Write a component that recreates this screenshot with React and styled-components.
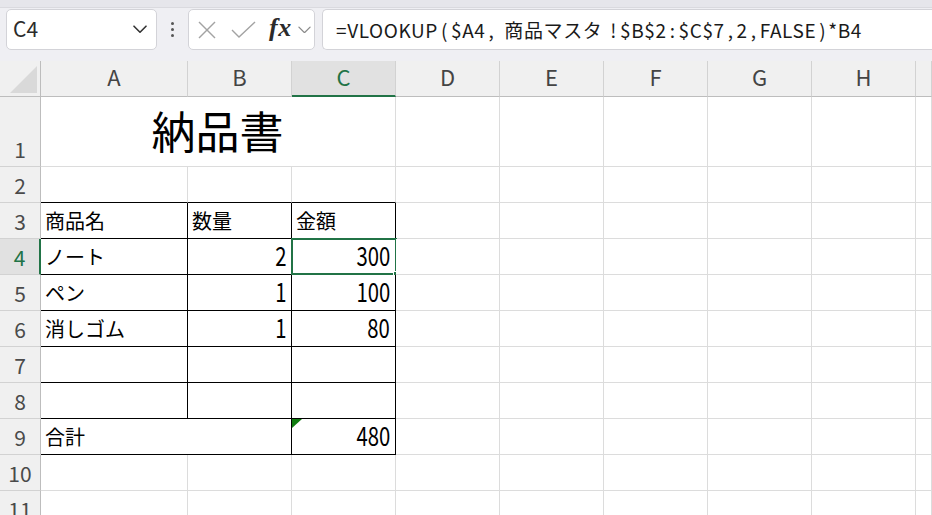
import React from "react";
import styled, { createGlobalStyle, css } from "styled-components";

const Global = createGlobalStyle`
  html, body { margin: 0; padding: 0; background: #ffffff; overflow: hidden; }
  body { font-family: "Noto Sans CJK JP", "Noto Sans", sans-serif; }
  * { box-sizing: border-box; }
`;

const GRID = "#dcdcdc";
const BLACK = "#000000";
const GREEN = "#217346";
const JP = `"Noto Sans CJK JP", "Noto Sans", sans-serif`;

const Page = styled.div`
  width: 932px;
  height: 515px;
  overflow: hidden;
  background: #ffffff;
`;

const TopStrip = styled.div`
  height: 8px;
  background: #e6e6eb;
  border-bottom: 1px solid #dadadf;
`;

const Toolbar = styled.div`
  height: 53px;
  background: #efeff3;
  display: flex;
  align-items: flex-start;
  padding: 1px 0 0 6px;
`;

const Box = styled.div`
  height: 41px;
  background: #ffffff;
  border: 1px solid #d3d3d8;
  border-radius: 5px;
  display: flex;
  align-items: center;
`;

const NameBox = styled(Box)`
  width: 151px;
  padding: 0 9px 0 6px;
  justify-content: space-between;
`;

const NameText = styled.span`
  font-family: ${JP};
  font-size: 21px;
  color: #2b2b2b;
  line-height: 1;
  padding-bottom: 2px;
`;

const Dots = styled.div`
  width: 31px;
  display: flex;
  flex-direction: column;
  align-items: center;
  justify-content: center;
  gap: 3px;
  height: 41px;
  span {
    width: 3px;
    height: 3px;
    border-radius: 50%;
    background: #555;
  }
`;

const FxBox = styled(Box)`
  width: 127px;
  padding-left: 8px;
`;

const FxText = styled.span`
  font-family: "Liberation Serif", "DejaVu Serif", serif;
  font-style: italic;
  font-weight: bold;
  font-size: 26px;
  color: #2b2b2b;
  line-height: 1;
  margin: 0 6px 4px 12px;
  letter-spacing: 0.5px;
`;

const FormulaBox = styled(Box)`
  margin-left: 7px;
  flex: 1;
  border-right: none;
  border-top-right-radius: 0;
  border-bottom-right-radius: 0;
  padding-left: 13px;
  font-family: ${JP};
  font-size: 19px;
  letter-spacing: 0.6px;
  color: #1a1a1a;
  white-space: nowrap;
`;

const P = styled.span`
  margin: 0 ${(p) => p.$r ?? 3}px 0 ${(p) => p.$l ?? 3}px;
`;

const Sheet = styled.div`
  display: grid;
  grid-template-columns: 41px 147px repeat(7, 104px) 1fr;
  grid-template-rows: 36px 70px repeat(10, 36px);
`;

const Corner = styled.div`
  background: #f0f0f0;
  border-right: 1px solid #bdbdbd;
  border-bottom: 1px solid #bdbdbd;
  position: relative;
  &::after {
    content: "";
    position: absolute;
    right: 3px;
    bottom: 3px;
    width: 0;
    height: 0;
    border-left: 27px solid transparent;
    border-bottom: 27px solid #d9d9d9;
  }
`;

const ColHeader = styled.div`
  background: ${(p) => (p.$sel ? "#e1e1e1" : "#f0f0f0")};
  border-right: 1px solid #d2d2d2;
  border-bottom: ${(p) => (p.$sel ? `2px solid ${GREEN}` : "1px solid #bdbdbd")};
  display: flex;
  align-items: center;
  justify-content: center;
  padding-bottom: ${(p) => (p.$sel ? "5px" : "6px")};
  font-family: ${JP};
  font-size: 22px;
  line-height: 1;
  color: ${(p) => (p.$sel ? GREEN : "#444")};
`;

const RowHeader = styled.div`
  background: ${(p) => (p.$sel ? "#e1e1e1" : "#f0f0f0")};
  border-right: ${(p) => (p.$sel ? `2px solid ${GREEN}` : "1px solid #bdbdbd")};
  border-bottom: 1px solid #d2d2d2;
  display: flex;
  align-items: flex-end;
  justify-content: center;
  padding-bottom: 5px;
  font-family: ${JP};
  font-size: 21px;
  line-height: 24px;
  color: ${(p) => (p.$sel ? GREEN : "#4a4a4a")};
`;

const Cell = styled.div`
  position: relative;
  background: #ffffff;
  border-right: 1px solid ${(p) => (p.$br ? BLACK : GRID)};
  border-bottom: 1px solid ${(p) => (p.$bb ? BLACK : GRID)};
  grid-column: span ${(p) => p.$span || 1};
  display: flex;
  align-items: flex-end;
  justify-content: ${(p) => (p.$right ? "flex-end" : "flex-start")};
  padding: 0 5px 5px 4px;
  font-family: ${JP};
  font-size: 20px;
  line-height: 24px;
  color: #000;
  white-space: nowrap;
  ${(p) =>
    p.$title &&
    css`
      justify-content: center;
      font-size: 44px;
      line-height: 52px;
      padding-bottom: 10px;
    `}
`;

const Num = styled.span`
  display: inline-block;
  font-size: 26px;
  line-height: 30px;
  transform: scaleX(0.78);
  transform-origin: right bottom;
  margin-bottom: -1px;
`;

const Selection = styled.div`
  position: absolute;
  top: -1px;
  left: -1px;
  right: -2px;
  bottom: -1px;
  border: 2px solid ${GREEN};
  pointer-events: none;
`;

const Handle = styled.div`
  position: absolute;
  right: -5px;
  bottom: -5px;
  width: 7px;
  height: 7px;
  background: ${GREEN};
  border: 1px solid #ffffff;
`;

const ErrorMark = styled.div`
  position: absolute;
  left: 0;
  top: 0;
  width: 0;
  height: 0;
  border-top: 9px solid #107c10;
  border-right: 10px solid transparent;
`;

const Chevron = ({ size = 14, color = "#333", w = 1.6 }) => (
  <svg width={size} height={size * 0.6} viewBox="0 0 14 8" fill="none">
    <polyline points="1,1 7,7 13,1" stroke={color} strokeWidth={w} strokeLinecap="round" strokeLinejoin="round" />
  </svg>
);

const XIcon = () => (
  <svg width="20" height="20" viewBox="0 0 20 20" fill="none">
    <line x1="2" y1="2" x2="18" y2="18" stroke="#a3a3a3" strokeWidth="1.4" />
    <line x1="18" y1="2" x2="2" y2="18" stroke="#a3a3a3" strokeWidth="1.4" />
  </svg>
);

const CheckIcon = () => (
  <svg width="26" height="20" viewBox="0 0 26 20" fill="none" style={{ marginLeft: 14 }}>
    <polyline points="1,10 8,17 24,2" stroke="#a3a3a3" strokeWidth="1.4" fill="none" />
  </svg>
);

const COLS = ["A", "B", "C", "D", "E", "F", "G", "H", ""];

const EmptyRest = ({ from }) =>
  COLS.slice(from).map((c, i) => <Cell key={`e${from + i}`} />);

export default function App() {
  const tb = (row) => row >= 3 && row <= 9;
  const rows = [];
  for (let r = 1; r <= 11; r++) {
    rows.push(
      <RowHeader key={`h${r}`} $sel={r === 4}>
        {r}
      </RowHeader>
    );
    if (r === 1) {
      rows.push(
        <Cell key="t" $span={3} $title>
          納品書
        </Cell>
      );
      rows.push(<EmptyRest key="r1" from={3} />);
      continue;
    }
    if (r === 2) {
      rows.push(<Cell key="a2" $bb />, <Cell key="b2" $bb />, <Cell key="c2" $bb />);
      rows.push(<EmptyRest key="r2" from={3} />);
      continue;
    }
    if (r === 9) {
      rows.push(
        <Cell key="a9" $span={2} $br $bb>
          合計
        </Cell>,
        <Cell key="c9" $br $bb $right>
          <ErrorMark />
          <Num>480</Num>
        </Cell>
      );
      rows.push(<EmptyRest key="r9" from={3} />);
      continue;
    }
    if (tb(r)) {
      const data = {
        3: ["商品名", "数量", "金額"],
        4: ["ノート", "2", "300"],
        5: ["ペン", "1", "100"],
        6: ["消しゴム", "1", "80"],
        7: ["", "", ""],
        8: ["", "", ""],
      }[r];
      const numeric = r >= 4;
      rows.push(
        <Cell key={`a${r}`} $br $bb>
          {data[0]}
        </Cell>,
        <Cell key={`b${r}`} $br $bb $right={numeric}>
          {numeric && data[1] ? <Num>{data[1]}</Num> : data[1]}
        </Cell>,
        <Cell key={`c${r}`} $br $bb $right={numeric}>
          {numeric && data[2] ? <Num>{data[2]}</Num> : data[2]}
          {r === 4 && (
            <Selection>
              <Handle />
            </Selection>
          )}
        </Cell>
      );
      rows.push(<EmptyRest key={`r${r}`} from={3} />);
      continue;
    }
    rows.push(<EmptyRest key={`r${r}`} from={0} />);
  }

  return (
    <Page>
      <Global />
      <TopStrip />
      <Toolbar>
        <NameBox>
          <NameText>C4</NameText>
          <Chevron size={14} color="#333" w={1.6} />
        </NameBox>
        <Dots>
          <span />
          <span />
          <span />
        </Dots>
        <FxBox>
          <XIcon />
          <CheckIcon />
          <FxText>fx</FxText>
          <Chevron size={13} color="#8a8a8a" w={1.4} />
        </FxBox>
        <FormulaBox>
          =VLOOKUP<P>(</P>$A4<P $r={10}>,</P>商品マスタ<P $l={8}>!</P>$B$2<P>:</P>$C$7<P>,</P>2<P>,</P>FALSE<P $r={2}>)</P>*B4
        </FormulaBox>
      </Toolbar>
      <Sheet>
        <Corner />
        {COLS.map((c, i) => (
          <ColHeader key={`c${i}`} $sel={c === "C"}>
            {c}
          </ColHeader>
        ))}
        {rows}
      </Sheet>
    </Page>
  );
}
